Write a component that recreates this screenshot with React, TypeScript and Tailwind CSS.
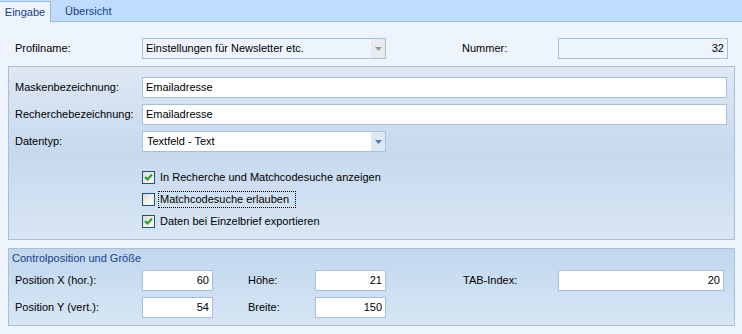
import React from "react";

const inputCls =
  "h-[21px] border border-[#a7bfdf] bg-white px-[3px] flex items-center text-black";

function Check({ checked }: { checked: boolean }) {
  return (
    <div className="w-[13px] h-[13px] border border-[#1c5180] bg-gradient-to-br from-[#dcdcd6] to-white flex items-center justify-center shrink-0">
      {checked && (
        <svg width="9" height="9" viewBox="0 0 9 9">
          <path d="M1 4 L3.5 6.5 L8 1.5" stroke="#21a121" strokeWidth="2" fill="none" />
        </svg>
      )}
    </div>
  );
}

function Arrow({ color }: { color: string }) {
  return (
    <svg width="7" height="4" viewBox="0 0 7 4">
      <path d="M0 0 H7 L3.5 4 Z" fill={color} />
    </svg>
  );
}

export default function App() {
  return (
    <div
      className="w-[742px] h-[334px] bg-[#eef4fd] text-[11px] text-black overflow-hidden"
      style={{ fontFamily: '"Liberation Sans", Arial, sans-serif' }}
    >
      {/* Tabs */}
      <div className="h-[22px] bg-[#bfdbfd] border-b border-[#99b9e3] flex items-end">
        <div className="h-[21px] w-[51px] -mb-px bg-[#eef4fd] border-r border-t border-[#99b9e3] flex items-center justify-center text-[#15428b]">
          Eingabe
        </div>
        <div className="h-[20px] ml-[14px] flex items-center text-[#15428b]">Übersicht</div>
      </div>

      {/* Row 1 */}
      <div className="mt-[16px] flex items-center h-[21px]">
        <div className="w-[142px] pl-[15px]">Profilname:</div>
        <div className="w-[244px] h-[21px] border border-[#a7bfdf] bg-[#eef4fd] flex items-center">
          <div className="flex-1 pl-[3px]">Einstellungen für Newsletter etc.</div>
          <div className="w-[14px] h-full bg-[#e8ebee] flex items-center justify-center">
            <Arrow color="#9c9c8c" />
          </div>
        </div>
        <div className="w-[96px] ml-[76px]">Nummer:</div>
        <div className="w-[170px] h-[21px] border border-[#a7bfdf] bg-[#eef4fd] flex items-center justify-end pr-[3px]">
          32
        </div>
      </div>

      {/* Panel 1 */}
      <div className="mt-[7px] mx-[8px] w-[727px] border border-[#a9bfd6] bg-gradient-to-b from-[#dfe8f4] via-[#c7d9ee] to-[#d9e6f4] pl-[6px] pt-[10px] pb-[7px]">
        <div className="flex flex-col gap-[6px]">
          <div className="flex items-center">
            <div className="w-[127px]">Maskenbezeichnung:</div>
            <div className={inputCls + " w-[585px]"}>Emailadresse</div>
          </div>
          <div className="flex items-center">
            <div className="w-[127px]">Recherchebezeichnung:</div>
            <div className={inputCls + " w-[585px]"}>Emailadresse</div>
          </div>
          <div className="flex items-center">
            <div className="w-[127px]">Datentyp:</div>
            <div className="w-[244px] h-[21px] border border-[#a7bfdf] bg-white flex items-center">
              <div className="flex-1 pl-[4px]">Textfeld - Text</div>
              <div className="w-[14px] h-full bg-[#dde8f5] flex items-center justify-center">
                <Arrow color="#4d7ab4" />
              </div>
            </div>
          </div>
        </div>
        <div className="mt-[14px] ml-[127px] flex flex-col">
          <div className="h-[22px] flex items-center gap-[5px]">
            <Check checked />
            <span>In Recherche und Matchcodesuche anzeigen</span>
          </div>
          <div className="h-[22px] flex items-center gap-[3px]">
            <Check checked={false} />
            <span className="border border-dotted border-black px-[1px] h-[17px] w-[138px] flex items-center">
              Matchcodesuche erlauben
            </span>
          </div>
          <div className="h-[22px] flex items-center gap-[5px]">
            <Check checked />
            <span>Daten bei Einzelbrief exportieren</span>
          </div>
        </div>
      </div>

      {/* Panel 2 */}
      <div className="mt-[8px] mx-[8px] w-[727px] border border-[#a9bfd6] bg-gradient-to-b from-[#c1d7ee] to-[#d7e6f4] pb-[7px]">
        <div className="h-[18px] flex items-center pl-[3px] text-[#15428b]">Controlposition und Größe</div>
        <div className="mt-[3px] flex flex-col gap-[6px] pl-[6px]">
          <div className="flex items-center">
            <div className="w-[127px]">Position X (hor.):</div>
            <div className={inputCls + " w-[71px] justify-end"}>60</div>
            <div className="w-[67px] ml-[35px]">Höhe:</div>
            <div className={inputCls + " w-[71px] justify-end"}>21</div>
            <div className="w-[95px] ml-[77px]">TAB-Index:</div>
            <div className={inputCls + " w-[166px] justify-end"}>20</div>
          </div>
          <div className="flex items-center">
            <div className="w-[127px]">Position Y (vert.):</div>
            <div className={inputCls + " w-[71px] justify-end"}>54</div>
            <div className="w-[67px] ml-[35px]">Breite:</div>
            <div className={inputCls + " w-[71px] justify-end"}>150</div>
          </div>
        </div>
      </div>
    </div>
  );
}
